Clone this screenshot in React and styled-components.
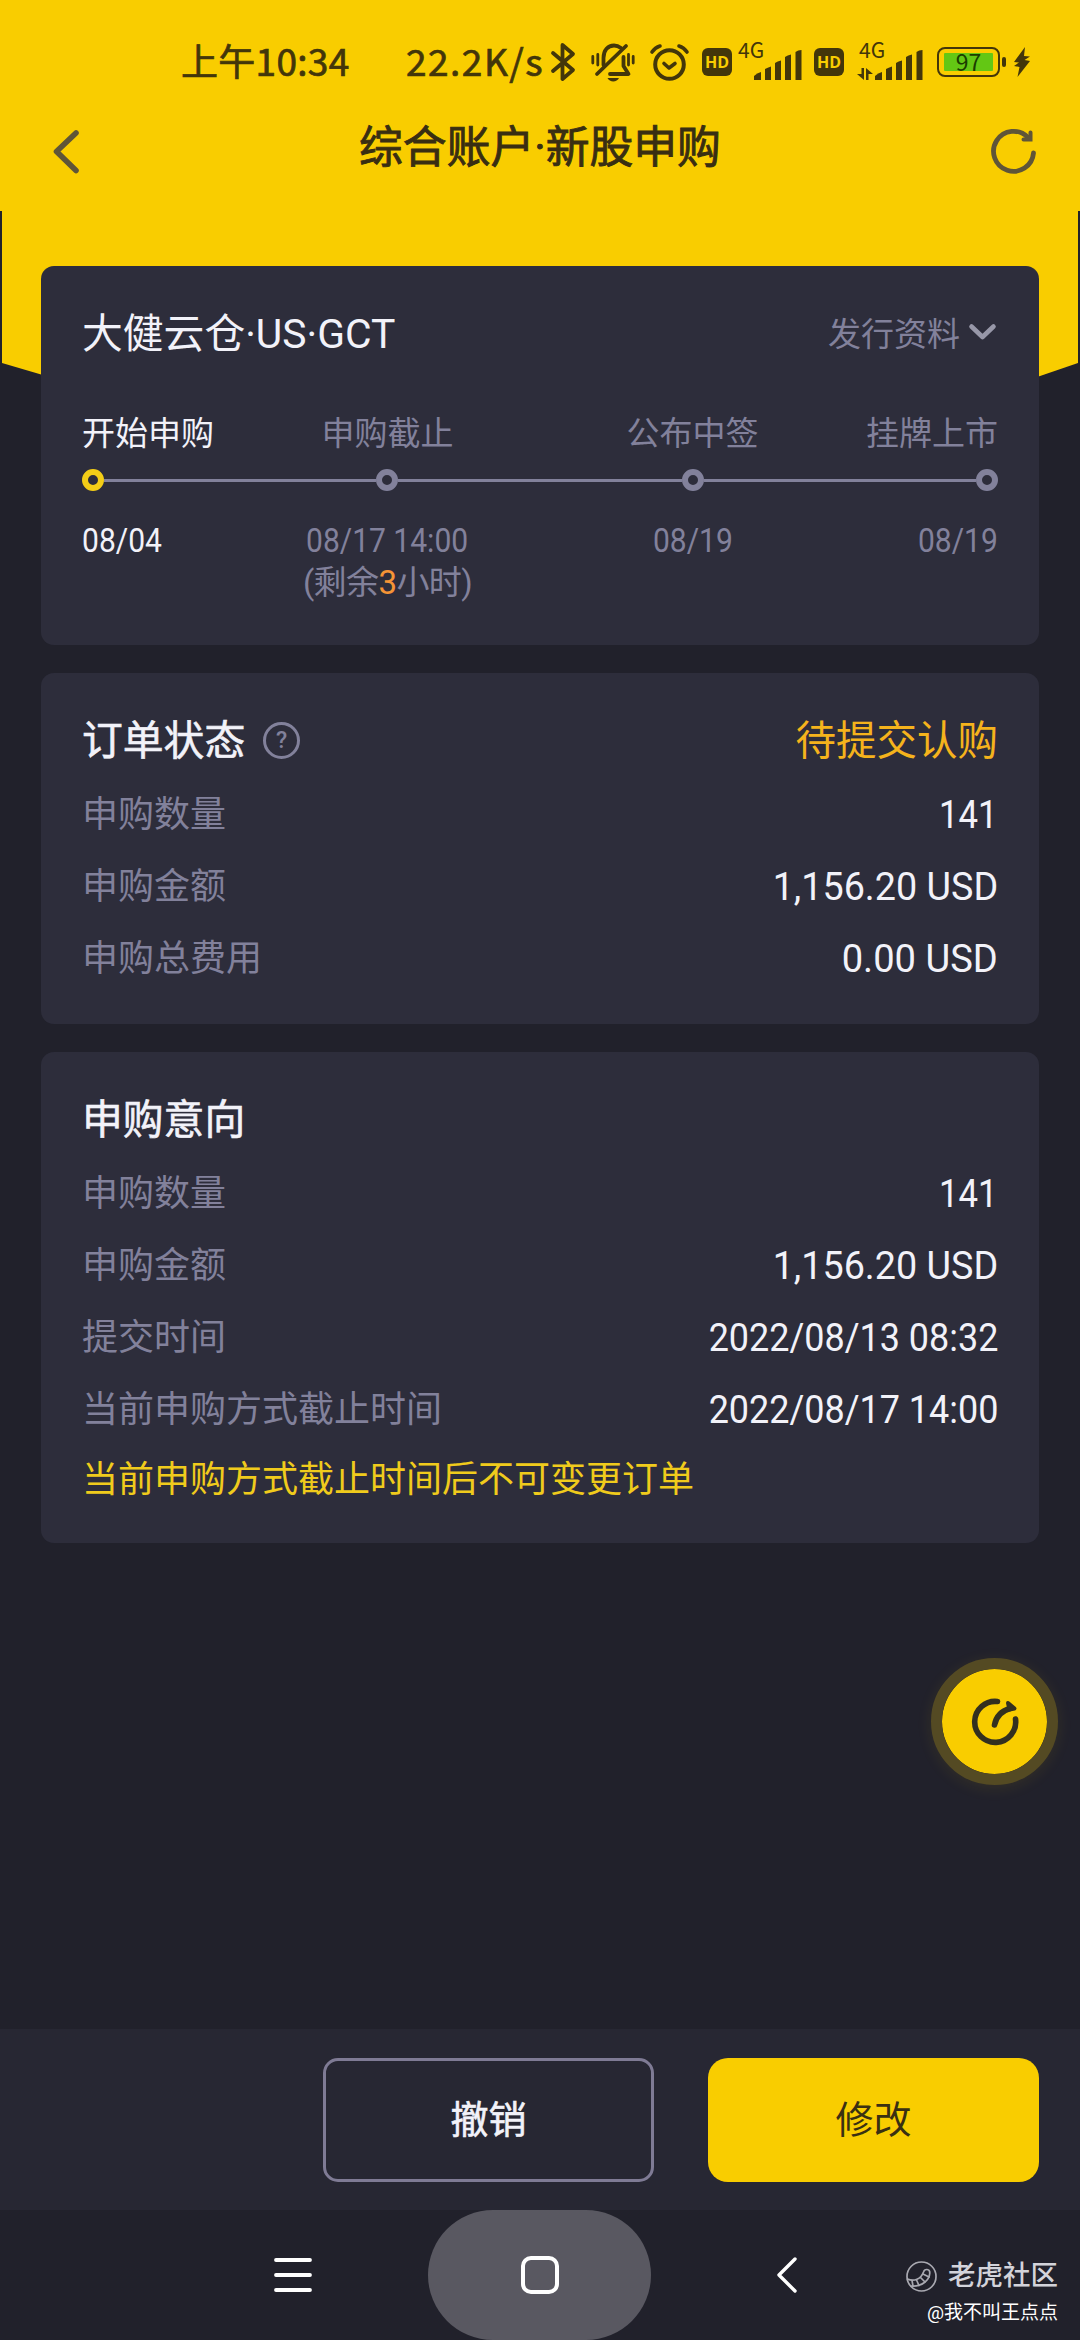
import React from "react";
import styled, { createGlobalStyle } from "styled-components";

const YELLOW = "#f9cd00";
const INK = "#43360a";
const GREY = "#82819b";
const WHITE = "#f2f2f9";

const GlobalStyle = createGlobalStyle`
  * {
    box-sizing: border-box;
  }
  body {
    margin: 0;
    background: #21212b;
    font-family: Roboto, "Noto Sans CJK SC", sans-serif;
    color: ${WHITE};
  }
  svg {
    display: block;
    flex: none;
    overflow: visible;
  }
`;

const Screen = styled.div`
  width: 1080px;
  height: 2340px;
  display: flex;
  flex-direction: column;
  overflow: hidden;
  background: #21212b;
`;

/* ---------- header ---------- */

const Header = styled.header`
  flex: none;
  height: 211px;
  background: ${YELLOW};
  color: ${INK};
`;
const StatusBar = styled.div`
  display: flex;
  align-items: center;
  height: 124px;
  padding-left: 181px;
  font-family: "Noto Sans CJK SC", sans-serif;
  font-size: 37px;
  line-height: 48px;
  white-space: nowrap;
`;
const StatusText = styled.span`
  flex: none;
  width: ${p => p.w}px;
  letter-spacing: ${p => p.tracking || 0}px;
  margin-top: -5px;
  -webkit-text-stroke: 0.7px ${INK};
`;
const StatusIcon = styled.span`
  flex: none;
  margin-left: ${p => p.gap}px;
`;
const HdBadge = styled.span`
  flex: none;
  display: flex;
  align-items: center;
  justify-content: center;
  width: 30px;
  height: 28px;
  margin-left: ${p => p.gap}px;
  border-radius: 6px;
  background: ${INK};
  color: ${YELLOW};
  font: 700 16px/28px "Open Sans", sans-serif;
`;
const Network = styled.span`
  flex: none;
  position: relative;
  width: ${p => p.w}px;
  height: 36px;
  margin-left: ${p => p.gap}px;
  display: flex;
  justify-content: flex-end;
  align-items: flex-end;
`;
const NetworkType = styled.span`
  position: absolute;
  left: ${p => p.x}px;
  top: -5px;
  font: 400 21px/20px "Noto Sans CJK SC", sans-serif;
`;
const BatteryShell = styled.span`
  flex: none;
  width: 63px;
  height: 30px;
  margin-left: 14px;
  padding: 4px;
  border: 2px solid ${INK};
  border-radius: 8px;
`;
const BatteryLevel = styled.span`
  display: block;
  width: 49px;
  height: 18px;
  margin: 0 1px;
  border-radius: 1px;
  background: #63c714;
  color: #1b3d00;
  text-align: center;
  font: 400 23px/17px "Noto Sans CJK SC", sans-serif;
`;
const BatteryCap = styled.span`
  flex: none;
  width: 4px;
  height: 10px;
  margin-left: 2px;
  border-radius: 2px;
  background: ${INK};
`;

const AppBar = styled.div`
  display: flex;
  align-items: center;
  justify-content: space-between;
  height: 54px;
  padding: 0 44px 0 45px;
`;
const Title = styled.h1`
  margin: -6px 0 0;
  padding-left: 9px;
  color: #392e12;
  text-align: center;
  font-size: 43.8px;
  font-weight: 400;
  line-height: 54px;
  -webkit-text-stroke: 0.9px #392e12;
`;
const HeroTail = styled.div`
  flex: none;
  height: 190px;
  margin: 0 2px;
  background: ${YELLOW};
  clip-path: polygon(0 0, 100% 0, 100% 152px, 94% 174px, 6% 171px, 0 152px);
`;

/* ---------- cards ---------- */

const Content = styled.main`
  position: relative;
  display: flex;
  flex-direction: column;
  gap: 28px;
  margin-top: -135px;
  padding: 0 41px;
`;
const Card = styled.section`
  height: ${p => p.h}px;
  padding: 28px 41px 0;
  border-radius: 13px;
  background: #2d2d3b;
`;
const CardHead = styled.div`
  display: flex;
  align-items: center;
  justify-content: space-between;
  height: 76px;
`;
const CardTitle = styled.h2`
  display: flex;
  align-items: center;
  margin: 0;
  padding-top: 3px;
  font-size: 40.8px;
  font-weight: 400;
  line-height: 50px;
  -webkit-text-stroke: ${p => (p.strong ? 0.6 : 0)}px ${WHITE};
`;
const Status = styled.span`
  padding-top: 3px;
  color: #f5b31c;
  font-size: 40.5px;
  line-height: 50px;
`;
const MoreLink = styled.span`
  display: flex;
  align-items: center;
  gap: 9px;
  padding-right: 2px;
  color: ${GREY};
  font-size: 33px;
`;
const HelpIcon = styled.span`
  display: flex;
  align-items: center;
  justify-content: center;
  width: 37px;
  height: 37px;
  margin-left: 18px;
  border: 3px solid ${GREY};
  border-radius: 50%;
  color: ${GREY};
  font-size: 23px;
  font-weight: 500;
  line-height: 30px;
  -webkit-text-stroke: 0;
`;
const Num = styled.span`
  display: inline-block;
  white-space: nowrap;
  transform: scaleX(${p => p.squeeze || 0.91});
  transform-origin: ${p => p.from || "right"} center;
`;
const Row = styled.div`
  display: flex;
  align-items: center;
  justify-content: space-between;
  height: 72px;
  padding-top: 3px;
  line-height: 50px;
`;
const Label = styled.span`
  color: ${GREY};
  font-size: 36px;
`;
const Value = styled.span`
  font-size: 39.5px;
`;
const Note = styled.p`
  margin: 0;
  padding-top: 3px;
  color: #f0cb1c;
  font-size: 36px;
  line-height: 66px;
`;

/* ---------- timeline ---------- */

const StageGrid = styled.div`
  display: grid;
  grid-template-columns: 153px 305px 305px 153px;
  color: ${GREY};
  font-size: 33px;
  line-height: 42px;
  text-align: center;
  & > :first-child {
    color: ${WHITE};
    text-align: left;
  }
  & > :last-child {
    text-align: right;
  }
`;
const StageNames = styled(StageGrid)`
  margin-top: 43px;
`;
const StageDates = styled(StageGrid)`
  margin-top: 29px;
`;
const Track = styled.div`
  display: flex;
  align-items: center;
  height: 22px;
  margin-top: 14px;
`;
const Dot = styled.span`
  flex: none;
  width: 22px;
  height: 22px;
  border: 6px solid ${p => (p.active ? "#f3cd17" : GREY)};
  border-radius: 50%;
`;
const Line = styled.span`
  flex: ${p => p.span};
  height: 3px;
  background: ${GREY};
`;
const Remaining = styled.span`
  display: block;
  letter-spacing: -0.6px;
  em {
    color: #f59436;
    font-style: normal;
  }
`;

/* ---------- bottom ---------- */

const Fab = styled.button`
  position: absolute;
  left: 931px;
  top: 1658px;
  display: flex;
  align-items: center;
  justify-content: center;
  width: 127px;
  height: 127px;
  padding: 0;
  border: 11px solid #544a23;
  border-radius: 50%;
  background: ${YELLOW};
  background-clip: padding-box;
  box-shadow: 0 3px 16px rgba(249, 205, 0, 0.09);
`;
const ActionBar = styled.footer`
  flex: none;
  display: flex;
  justify-content: flex-end;
  align-items: center;
  gap: 54px;
  height: 181px;
  margin-top: auto;
  padding: 0 41px;
  background: #272733;
`;
const Action = styled.button`
  width: 331px;
  height: 124px;
  padding: 0;
  border: ${p => (p.primary ? "none" : "3px solid #7f7b95")};
  border-radius: ${p => (p.primary ? 20 : 15)}px;
  background: ${p => (p.primary ? YELLOW : "transparent")};
  color: ${p => (p.primary ? "#3a3012" : WHITE)};
  font: 400 38px/50px Roboto, "Noto Sans CJK SC", sans-serif;
  -webkit-text-stroke: ${p => (p.primary ? 0 : 0.6)}px ${WHITE};
`;
const NavBar = styled.nav`
  flex: none;
  display: flex;
  align-items: center;
  height: 130px;
  padding-left: 274px;
`;
const HomeKey = styled.span`
  display: flex;
  align-items: center;
  justify-content: center;
  width: 223px;
  height: 130px;
  margin: 0 126px 0 116px;
  border-radius: 65px;
  background: #595861;
`;
const HomeGlyph = styled.span`
  width: 38px;
  height: 38px;
  border: 4px solid #fff;
  border-radius: 10px;
`;
const Watermark = styled.div`
  display: flex;
  flex-direction: column;
  align-items: flex-end;
  width: 152px;
  margin: 32px 0 0 109px;
  color: #fff;
  font-size: 19px;
  line-height: 30px;
  white-space: nowrap;
`;
const Brand = styled.div`
  display: flex;
  align-items: center;
  gap: 11px;
  height: 44px;
  color: #d3d3da;
  font-size: 27.5px;
  font-weight: 500;
`;

/* ---------- icons ---------- */

const stroke = {
  fill: "none",
  stroke: INK,
  strokeLinecap: "round",
  strokeLinejoin: "round"
};

const BluetoothIcon = () => (
  <svg width="24" height="38" viewBox="0 0 24 38" {...stroke} strokeWidth="3.8">
    <path d="M2 10 L22 27 L11.5 36 V2 L22 11 L2 28" />
  </svg>
);

const MuteIcon = () => (
  <svg width="44" height="39" viewBox="0 0 44 39" {...stroke} strokeWidth="3.8">
    <path d="M12.500 22 V15 C12.500 7 17 2.500 23 2.500 C26 2.500 28 3.500 30 5" />
    <path d="M35 3 L6 31" />
    <path d="M32.500 14 V23 L37.500 31 H19" />
    <path d="M1.800 13.500 V20 M6.800 11.500 V22 M37.500 11.500 V22 M42.200 13.500 V20" strokeWidth="2.800" />
    <path d="M16.500 35 H28 C26 39.500 18.500 39.500 16.500 35 Z" fill={INK} stroke="none" />
  </svg>
);

const AlarmIcon = () => (
  <svg width="39" height="37" viewBox="0 0 39 37" {...stroke} strokeWidth="4">
    <circle cx="19.500" cy="20.500" r="14.300" />
    <path d="M14 19.500 L19 24 L25 19.500" strokeWidth="3.600" />
    <path d="M2 8 C4 5 6.500 3 10 2 M37 8 C35 5 32.500 3 29 2" strokeWidth="3.600" />
  </svg>
);

const SignalIcon = () => (
  <svg width="48" height="31" viewBox="0 0 48 31" fill={INK}>
    <path d="M0 31 V27 Q3 24 7 23 V31 Z" />
    <path d="M11 31 V20 Q13.500 18.500 17 17.500 V31 Z" />
    <path d="M21 31 V14 Q23.500 12 27 11.500 V31 Z" />
    <path d="M31 31 V8 Q33.500 6 37 5.500 V31 Z" />
    <path d="M41.500 31 V3 Q44 1.200 47.500 1 V31 Z" />
  </svg>
);

const DataIcon = () => (
  <svg width="16" height="12" viewBox="0 0 16 12" fill={INK}>
    <path d="M4.500 0 H7 V12 L0 6 H4.500 Z" />
    <path d="M11.500 12 H9 V0 L16 6 H11.500 Z" />
  </svg>
);

const BoltIcon = () => (
  <svg width="18" height="30" viewBox="0 0 18 30" fill={INK}>
    <path d="M12 0 L1 15 L6 15.500 L1 19 L6.500 20 L4.500 30 L17 14 L11.500 13 L17 9.500 L11 9 Z" />
  </svg>
);

const BackIcon = () => (
  <svg width="34" height="50" viewBox="0 0 34 50" {...stroke} stroke="#5f5538" strokeWidth="5.600">
    <path d="M31 7 L11.500 25.500 L31 44.500" />
  </svg>
);

const RefreshIcon = () => (
  <svg width="44" height="44" viewBox="0 0 44 44" {...stroke} stroke="#5f5538" strokeWidth="4.800">
    <path d="M41.500 24 A20 20 0 1 1 36 8.500" />
    <path d="M31.500 10.500 H38.500 V3.500" strokeWidth="4" strokeLinejoin="miter" />
  </svg>
);

const ChevronIcon = () => (
  <svg width="27" height="16" viewBox="0 0 27 16" {...stroke} stroke="#9797a8" strokeWidth="4.600">
    <path d="M2.500 2.500 L13.500 13 L24.500 2.500" />
  </svg>
);

const GaugeIcon = () => (
  <svg width="48" height="48" viewBox="0 0 48 48" {...stroke} stroke="#33301f" strokeWidth="5.600">
    <path d="M26.500 3.500 A20.500 20.500 0 1 0 44.500 21" />
    <path d="M23.500 27 C25 19 30 13 39 10.500" />
    <path d="M37 5 L43.500 10.500 L38.500 11.500 Z" strokeWidth="4" fill="#33301f" />
  </svg>
);

const MenuIcon = () => (
  <svg width="38" height="34" viewBox="0 0 38 34" {...stroke} stroke="#fff" strokeWidth="3.800">
    <path d="M2 2 H36 M2 17 H36 M2 32 H36" />
  </svg>
);

const NavBackIcon = () => (
  <svg width="20" height="36" viewBox="0 0 20 36" {...stroke} stroke="#fff" strokeWidth="3.400">
    <path d="M18 2 L2 18 L18 34" />
  </svg>
);

const TigerIcon = () => (
  <svg width="31" height="31" viewBox="0 0 31 31" {...stroke} stroke="#a9a9b1" strokeWidth="1.700">
    <circle cx="15.500" cy="15.500" r="14.500" />
    <path d="M1.500 18 C8 21 15 18 17.500 11 C18.500 7.500 24 7.500 23.800 12 C23.500 19 16 26 5 25" />
    <path d="M6 19.500 L7 25 M10.500 19 L13 24.500 M14.500 16.500 L19 21 M17 13 L23 16" />
  </svg>
);

/* ---------- data ---------- */

const stages = ["开始申购", "申购截止", "公布中签", "挂牌上市"];

const orderRows = [
  { label: "申购数量", value: "141", squeeze: 0.88 },
  { label: "申购金额", value: "1,156.20 USD", squeeze: 0.955 },
  { label: "申购总费用", value: "0.00 USD", squeeze: 0.965 }
];

const intentRows = [
  { label: "申购数量", value: "141", squeeze: 0.88 },
  { label: "申购金额", value: "1,156.20 USD", squeeze: 0.955 },
  { label: "提交时间", value: "2022/08/13 08:32" },
  { label: "当前申购方式截止时间", value: "2022/08/17 14:00" }
];

const Rows = ({ rows }) =>
  rows.map(row => (
    <Row key={row.label}>
      <Label>{row.label}</Label>
      <Value>
        <Num squeeze={row.squeeze}>{row.value}</Num>
      </Value>
    </Row>
  ));

const App = () => {
  return (
    <>
      <GlobalStyle />
      <Screen>
        <Header>
          <StatusBar>
            <StatusText w={225} tracking={0.3}>
              上午10:34
            </StatusText>
            <StatusText w={143} tracking={1.5}>
              22.2K/s
            </StatusText>
            <StatusIcon gap={2}>
              <BluetoothIcon />
            </StatusIcon>
            <StatusIcon gap={16}>
              <MuteIcon />
            </StatusIcon>
            <StatusIcon gap={15}>
              <AlarmIcon />
            </StatusIcon>
            <HdBadge gap={13}>HD</HdBadge>
            <Network w={64} gap={6}>
              <NetworkType x={0}>4G</NetworkType>
              <SignalIcon />
            </Network>
            <HdBadge gap={12}>HD</HdBadge>
            <Network w={66} gap={13}>
              <NetworkType x={2}>4G</NetworkType>
              <DataIcon />
              <StatusIcon gap={2}>
                <SignalIcon />
              </StatusIcon>
            </Network>
            <BatteryShell>
              <BatteryLevel>97</BatteryLevel>
            </BatteryShell>
            <BatteryCap />
            <StatusIcon gap={7}>
              <BoltIcon />
            </StatusIcon>
          </StatusBar>
          <AppBar>
            <BackIcon />
            <Title>综合账户·新股申购</Title>
            <RefreshIcon />
          </AppBar>
        </Header>
        <HeroTail />

        <Content>
          <Card h={379}>
            <CardHead>
              <CardTitle>
                大健云仓
                <Num from="left" squeeze={1}>
                  ·US·GCT
                </Num>
              </CardTitle>
              <MoreLink>
                发行资料
                <ChevronIcon />
              </MoreLink>
            </CardHead>
            <StageNames>
              {stages.map(name => (
                <span key={name}>{name}</span>
              ))}
            </StageNames>
            <Track>
              <Dot active />
              <Line span={272} />
              <Dot />
              <Line span={283} />
              <Dot />
              <Line span={272} />
              <Dot />
            </Track>
            <StageDates>
              <span>
                <Num from="left">08/04</Num>
              </span>
              <span>
                <Num from="center">08/17 14:00</Num>
                <Remaining>
                  (剩余<em>3</em>小时)
                </Remaining>
              </span>
              <span>
                <Num from="center">08/19</Num>
              </span>
              <span>
                <Num>08/19</Num>
              </span>
            </StageDates>
          </Card>

          <Card h={351}>
            <CardHead>
              <CardTitle strong>
                订单状态
                <HelpIcon>?</HelpIcon>
              </CardTitle>
              <Status>待提交认购</Status>
            </CardHead>
            <Rows rows={orderRows} />
          </Card>

          <Card h={491}>
            <CardHead>
              <CardTitle strong>申购意向</CardTitle>
            </CardHead>
            <Rows rows={intentRows} />
            <Note>当前申购方式截止时间后不可变更订单</Note>
          </Card>
        </Content>

        <ActionBar>
          <Action>撤销</Action>
          <Action primary>修改</Action>
        </ActionBar>
        <NavBar>
          <MenuIcon />
          <HomeKey>
            <HomeGlyph />
          </HomeKey>
          <NavBackIcon />
          <Watermark>
            <Brand>
              <TigerIcon />
              老虎社区
            </Brand>
            @我不叫王点点
          </Watermark>
        </NavBar>
        <Fab>
          <GaugeIcon />
        </Fab>
      </Screen>
    </>
  );
};

export default App;
